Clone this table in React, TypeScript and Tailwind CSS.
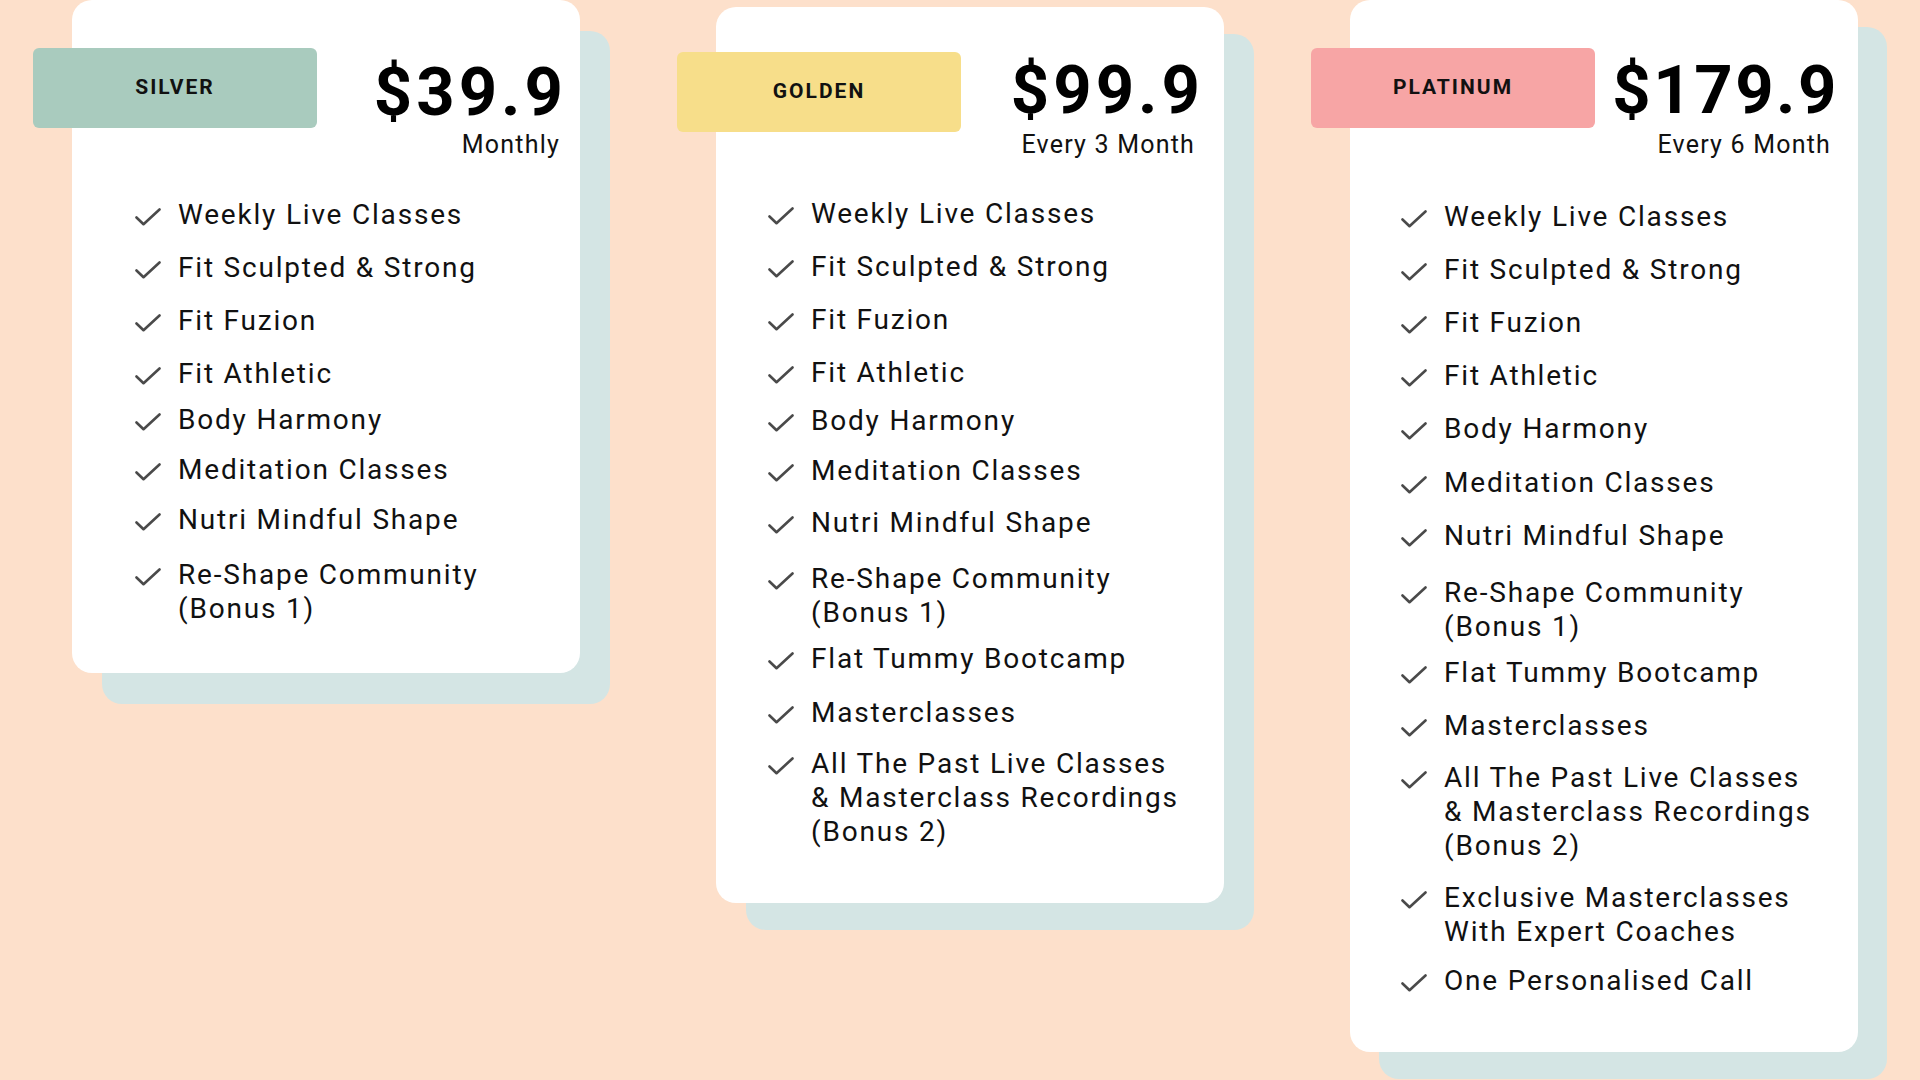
import React from "react";

interface Feature {
  lines: string[];
  gap: string;
}

interface Plan {
  name: string;
  price: string;
  period: string;
  badge: string;
  card: string;
  head: string;
  priceTop: string;
  priceText: string;
  periodTop: string;
  list: string;
  features: Feature[];
}

const f = (gap: string, ...lines: string[]): Feature => ({ lines, gap });

const plans: Plan[] = [
  {
    name: "SILVER",
    price: "$39.9",
    period: "Monthly",
    badge: "bg-[#a9cbbe]",
    card: "h-[673px] mt-0 shadow-[30px_31px_0_0_#d4e5e4]",
    head: "pt-[48px] pr-[13px]",
    priceTop: "mt-[11px]",
    priceText: "tracking-[4px]",
    periodTop: "mt-[4px] pr-[7px]",
    list: "mt-[38px] pl-[63px]",
    features: [
      f("mt-0", "Weekly Live Classes"),
      f("mt-[19px]", "Fit Sculpted & Strong"),
      f("mt-[19px]", "Fit Fuzion"),
      f("mt-[19px]", "Fit Athletic"),
      f("mt-[12px]", "Body Harmony"),
      f("mt-[16px]", "Meditation Classes"),
      f("mt-[16px]", "Nutri Mindful Shape"),
      f("mt-[21px]", "Re-Shape Community", "(Bonus 1)"),
    ],
  },
  {
    name: "GOLDEN",
    price: "$99.9",
    period: "Every 3 Month",
    badge: "bg-[#f7de8a]",
    card: "h-[896px] mt-[7px] ml-[136px] shadow-[30px_27px_0_0_#d4e5e4]",
    head: "pt-[45px] pr-[20px]",
    priceTop: "mt-[5px]",
    priceText: "tracking-[4px]",
    periodTop: "mt-[6px] pr-[9px]",
    list: "mt-[37px] pl-[52px]",
    features: [
      f("mt-0", "Weekly Live Classes"),
      f("mt-[19px]", "Fit Sculpted & Strong"),
      f("mt-[19px]", "Fit Fuzion"),
      f("mt-[19px]", "Fit Athletic"),
      f("mt-[14px]", "Body Harmony"),
      f("mt-[16px]", "Meditation Classes"),
      f("mt-[18px]", "Nutri Mindful Shape"),
      f("mt-[22px]", "Re-Shape Community", "(Bonus 1)"),
      f("mt-[12px]", "Flat Tummy Bootcamp"),
      f("mt-[20px]", "Masterclasses"),
      f("mt-[17px]", "All The Past Live Classes", "& Masterclass Recordings", "(Bonus 2)"),
    ],
  },
  {
    name: "PLATINUM",
    price: "$179.9",
    period: "Every 6 Month",
    badge: "bg-[#f7a5a5]",
    card: "h-[1052px] mt-0 ml-[126px] shadow-[29px_27px_0_0_#d4e5e4]",
    head: "pt-[48px] pr-[19px]",
    priceTop: "mt-[9px]",
    priceText: "tracking-[2.5px]",
    periodTop: "mt-[6px] pr-[8px]",
    list: "mt-[40px] pl-[51px]",
    features: [
      f("mt-0", "Weekly Live Classes"),
      f("mt-[19px]", "Fit Sculpted & Strong"),
      f("mt-[19px]", "Fit Fuzion"),
      f("mt-[19px]", "Fit Athletic"),
      f("mt-[19px]", "Body Harmony"),
      f("mt-[20px]", "Meditation Classes"),
      f("mt-[19px]", "Nutri Mindful Shape"),
      f("mt-[23px]", "Re-Shape Community", "(Bonus 1)"),
      f("mt-[12px]", "Flat Tummy Bootcamp"),
      f("mt-[19px]", "Masterclasses"),
      f("mt-[18px]", "All The Past Live Classes", "& Masterclass Recordings", "(Bonus 2)"),
      f("mt-[18px]", "Exclusive Masterclasses", "With Expert Coaches"),
      f("mt-[15px]", "One Personalised Call"),
    ],
  },
];

const Check: React.FC = () => (
  <svg
    width="26"
    height="18"
    viewBox="0 0 26 18"
    fill="none"
    className="mt-[10px] shrink-0"
  >
    <polyline
      points="1.5,9.5 8.5,16.2 24.5,1.5"
      stroke="#4a4a4a"
      strokeWidth="2.6"
      strokeLinecap="round"
      strokeLinejoin="round"
    />
  </svg>
);

const PlanCard: React.FC<{ plan: Plan }> = ({ plan }) => (
  <div
    className={`w-[508px] shrink-0 rounded-[20px] bg-white ${plan.card}`}
  >
    <div className={`flex items-start justify-between ${plan.head}`}>
      <div
        className={`-ml-[39px] flex h-[80px] w-[284px] items-center justify-center rounded-[6px] ${plan.badge}`}
      >
        <span className="text-[21px] font-bold tracking-[2px] text-[#111]">
          {plan.name}
        </span>
      </div>
      <div className={`flex flex-col items-end ${plan.priceTop}`}>
        <div
          className={`text-[67px] font-bold leading-[67px] text-black ${plan.priceText}`}
        >
          {plan.price}
        </div>
        <div
          className={`text-[25px] leading-[30px] tracking-[1.2px] text-[#111] ${plan.periodTop}`}
        >
          {plan.period}
        </div>
      </div>
    </div>

    <ul className={plan.list}>
      {plan.features.map((feature, i) => (
        <li key={i} className={`flex items-start ${feature.gap}`}>
          <Check />
          <div className="ml-[17px] whitespace-nowrap text-[28px] leading-[34px] tracking-[1.8px] text-[#111]">
            {feature.lines.map((line, j) => (
              <div key={j}>{line}</div>
            ))}
          </div>
        </li>
      ))}
    </ul>
  </div>
);

export default function App() {
  return (
    <div className="h-[1080px] w-full overflow-hidden bg-[#fde0cb] font-['Roboto',sans-serif]">
      <div className="flex items-start pl-[72px]">
        {plans.map((plan) => (
          <PlanCard key={plan.name} plan={plan} />
        ))}
      </div>
    </div>
  );
}
